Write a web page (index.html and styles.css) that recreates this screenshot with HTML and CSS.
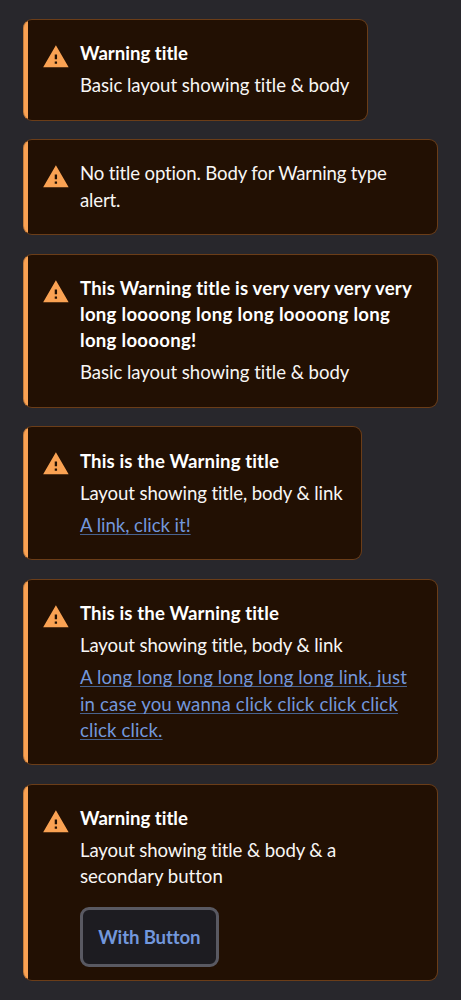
FILE: index.html
```html
<!DOCTYPE html>
<html lang="en">
<head>
<meta charset="utf-8">
<title>Warning alerts</title>
<link rel="stylesheet" href="styles.css">
</head>
<body>
<svg class="sprite" aria-hidden="true"><symbol id="warning" viewBox="0 0 24 24"><path d="M1 21h22L12 2 1 21zm12-3h-2v-2h2v2zm0-4h-2v-4h2v4z"/></symbol></svg>
<main class="stack">
  <section class="alert alert-basic">
    <svg class="icon"><use href="#warning"/></svg>
    <div class="content">
      <h2 class="title">Warning title</h2>
      <p class="body">Basic layout showing title &amp; body</p>
    </div>
  </section>
  <section class="alert">
    <svg class="icon"><use href="#warning"/></svg>
    <div class="content">
      <p class="body body-tight">No title option. Body for Warning type<br>alert.</p>
    </div>
  </section>
  <section class="alert">
    <svg class="icon"><use href="#warning"/></svg>
    <div class="content">
      <h2 class="title title-wide">This Warning title is very very very very<br><span class="title-wider">long loooong long long loooong long<br>long loooong!</span></h2>
      <p class="body">Basic layout showing title &amp; body</p>
    </div>
  </section>
  <section class="alert alert-link">
    <svg class="icon"><use href="#warning"/></svg>
    <div class="content">
      <h2 class="title title-medium">This is the Warning title</h2>
      <p class="body body-link">Layout showing title, body &amp; link</p>
      <p class="body"><a class="link" href="#">A link, click it!</a></p>
    </div>
  </section>
  <section class="alert">
    <svg class="icon"><use href="#warning"/></svg>
    <div class="content">
      <h2 class="title title-medium">This is the Warning title</h2>
      <p class="body body-link">Layout showing title, body &amp; link</p>
      <p class="body"><a class="link link-wide" href="#">A long long long long long long link, just<br><span class="link-wider">in case you wanna click click click click</span><br>click click.</a></p>
    </div>
  </section>
  <section class="alert alert-action">
    <svg class="icon"><use href="#warning"/></svg>
    <div class="content">
      <h2 class="title">Warning title</h2>
      <p class="body body-action">Layout showing title &amp; body &amp; a<br><span class="body-wide">secondary button</span></p>
      <button class="button">With Button</button>
    </div>
  </section>
</main>
</body>
</html>
```
FILE: styles.css
```css
* { box-sizing: border-box; }
body {
  margin: 0;
  background: #28272c;
  color: #f8f6f4;
  font: 400 18.6px/26.15px Lato, "Open Sans", sans-serif;
  font-variant-ligatures: none;
}
.sprite { display: block; width: 0; height: 0; }
.stack {
  display: flex;
  flex-direction: column;
  align-items: flex-start;
  gap: 18.6px;
  padding: 18.8px 23.3px;
}
.alert {
  display: flex;
  width: 414.4px;
  padding: 20.3px 0 21.2px 13.1px;
  border: 1px solid #6b3d18;
  border-left-color: #c47c3c;
  border-radius: 9px;
  background: linear-gradient(90deg, #faa253 4.3px, #221003 4.3px) no-repeat;
  overflow: hidden;
}
.alert-basic { width: 344.4px; }
.alert-link { width: 338.4px; }
.alert-action { padding-bottom: 12.8px; }
.icon {
  flex: none;
  width: 27.8px;
  height: 27.8px;
  margin: 2.9px 9.8px 0 5px;
  fill: #faa253;
}
.content {
  display: flex;
  flex-direction: column;
  align-items: flex-start;
  gap: 6px;
  white-space: nowrap;
}
.title { margin: 0; font-size: inherit; font-weight: 700; color: #fff; }
.title-medium { letter-spacing: 0.12px; }
.title-wide { letter-spacing: 0.2px; }
.title-wider { letter-spacing: 0.28px; }
.body { margin: 0; letter-spacing: -0.04px; }
.body-tight { letter-spacing: -0.16px; }
.body-link { letter-spacing: -0.1px; }
.body-action { letter-spacing: -0.13px; }
.body-wide { letter-spacing: 0; }
.link {
  color: #7297dc;
  text-decoration: underline 1px #48628f;
  text-decoration-skip-ink: none;
  text-underline-offset: 2px;
}
.link-wide { letter-spacing: 0.11px; }
.link-wider { letter-spacing: 0.16px; }
.button {
  width: 138.6px;
  height: 60px;
  margin-top: 11.8px;
  padding: 0;
  border: 3px solid #595962;
  border-radius: 9px;
  background: #1d1c21;
  color: #7297dc;
  font: inherit;
  font-weight: 700;
  letter-spacing: -0.15px;
}
```
